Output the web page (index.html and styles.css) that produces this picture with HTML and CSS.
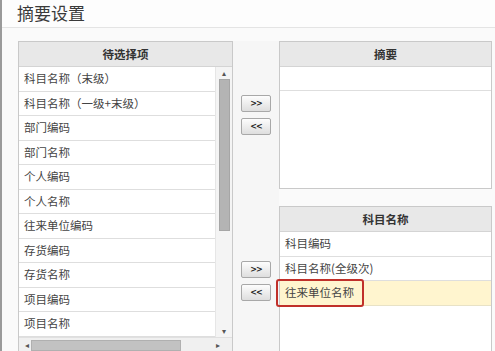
FILE: index.html
```html
<!DOCTYPE html>
<html lang="zh-CN">
<head>
    <meta charset="UTF-8">
    <title>摘要设置</title>
    <link rel="stylesheet" href="styles.css">
</head>
<body>
    <div class="dialog">
        <div class="titulo">摘要设置</div>

        <div class="conteudo">
            <!-- lista da esquerda -->
            <div class="painel esquerdo">
                <div class="cabecalho">待选择项</div>
                <div class="corpo">
                    <div class="lista">
                        <div class="item">科目名称（末级）</div>
                        <div class="item">科目名称（一级+末级）</div>
                        <div class="item">部门编码</div>
                        <div class="item">部门名称</div>
                        <div class="item">个人编码</div>
                        <div class="item">个人名称</div>
                        <div class="item">往来单位编码</div>
                        <div class="item">存货编码</div>
                        <div class="item">存货名称</div>
                        <div class="item">项目编码</div>
                        <div class="item">项目名称</div>
                    </div>
                    <div class="rolagem-v">
                        <span class="seta">&#9652;</span>
                        <div class="trilho-v"><div class="polegar-v"></div></div>
                        <span class="seta">&#9662;</span>
                    </div>
                </div>
                <div class="rolagem-h">
                    <span class="seta">&#9666;</span>
                    <div class="trilho-h"><div class="polegar-h"></div></div>
                    <span class="seta">&#9656;</span>
                </div>
            </div>

            <!-- botoes do meio -->
            <div class="meio">
                <div class="grupo primeiro">
                    <button type="button">&gt;&gt;</button>
                    <button type="button">&lt;&lt;</button>
                </div>
                <div class="grupo segundo">
                    <button type="button">&gt;&gt;</button>
                    <button type="button">&lt;&lt;</button>
                </div>
            </div>

            <!-- paineis da direita -->
            <div class="direita">
                <div class="painel resumo">
                    <div class="cabecalho">摘要</div>
                    <div class="item vazio"></div>
                </div>
                <div class="painel selecionados">
                    <div class="cabecalho">科目名称</div>
                    <div class="item">科目编码</div>
                    <div class="item">科目名称(全级次)</div>
                    <div class="item ativo">往来单位名称<span class="marca"></span></div>
                </div>
            </div>
        </div>
    </div>
</body>
</html>
```

FILE: styles.css
```css
/* base */
body {
    margin: 0;
    font-family: "Noto Sans CJK SC", "Noto Sans", sans-serif;
    color: #444;
    background: #fff;
}

.dialog {
    width: 495px;
    height: 351px;
    overflow: hidden;
    box-sizing: border-box;
    border-left: 2px solid #9a9a9a;
    background: #fafafa;
}

/* titulo */
.titulo {
    height: 27px;
    line-height: 25px;
    padding-left: 15px;
    font-size: 17px;
    color: #3a3a3a;
    background: #fdfdfd;
    border-bottom: 1px solid #e4e4e4;
}

.conteudo {
    display: flex;
    padding: 13px 0 0 16px;
}

/* paineis */
.painel {
    border: 1px solid #c9c9c9;
    background: #fff;
    box-sizing: border-box;
}

.cabecalho {
    height: 24px;
    line-height: 24px;
    text-align: center;
    font-size: 11.5px;
    font-weight: bold;
    color: #333;
    background: #e8e8e8;
    border-bottom: 1px solid #d4d4d4;
}

.item {
    height: 23.5px;
    line-height: 23.5px;
    padding-left: 5px;
    font-size: 11.5px;
    border-bottom: 1px solid #dedede;
    white-space: nowrap;
}

.esquerdo {
    width: 215px;
    height: 312px;
    display: flex;
    flex-direction: column;
}

.corpo {
    display: flex;
    flex: 1;
    min-height: 0;
}

.lista {
    width: 197px;
    border-right: 1px solid #e6e6e6;
}

/* barra de rolagem vertical */
.rolagem-v {
    width: 16px;
    display: flex;
    flex-direction: column;
    align-items: center;
    background: #f4f4f4;
}

.seta {
    font-size: 8px;
    line-height: 12px;
    color: #555;
}

.trilho-v {
    flex: 1;
    width: 11px;
}

.polegar-v {
    height: 152px;
    background: #b4b4b4;
    border: 1px solid #a6a6a6;
    box-sizing: border-box;
}

/* barra de rolagem horizontal */
.rolagem-h {
    height: 14px;
    flex-shrink: 0;
    display: flex;
    align-items: center;
    gap: 2px;
    padding: 0 12px 0 6px;
    background: #f0f0f0;
    border-top: 1px solid #e0e0e0;
}

.trilho-h {
    flex: 1;
    height: 11px;
}

.polegar-h {
    width: 150px;
    height: 11px;
    background: #c2c2c2;
    border: 1px solid #b0b0b0;
    box-sizing: border-box;
}

/* coluna do meio */
.meio {
    width: 46px;
    display: flex;
    flex-direction: column;
    align-items: flex-start;
    padding-left: 8px;
    box-sizing: border-box;
    background: #f6f6f6;
    height: 320px;
}

.grupo {
    display: flex;
    flex-direction: column;
    gap: 6px;
}

.grupo.primeiro {
    margin-top: 54px;
}

.grupo.segundo {
    margin-top: 126px;
}

button {
    width: 30px;
    height: 17px;
    padding: 0;
    font-family: "DejaVu Sans", sans-serif;
    font-size: 8px;
    font-weight: bold;
    letter-spacing: -1px;
    color: #222;
    border: 1px solid #a8a8a8;
    border-radius: 2px;
    background: linear-gradient(#fdfdfd, #dedede);
}

/* direita */
.direita {
    width: 213px;
    display: flex;
    flex-direction: column;
    gap: 17px;
}

.resumo {
    height: 148px;
}

.vazio {
    height: 23px;
}

.selecionados {
    height: 200px;
    border-bottom: none;
}

.item.ativo {
    position: relative;
    background: #fff5cf;
    border-bottom-color: #e8e2c6;
}

/* destaque vermelho */
.marca {
    position: absolute;
    left: -4px;
    top: -2px;
    width: 88px;
    height: 28px;
    border: 2.5px solid #c0302a;
    border-radius: 3px;
    box-sizing: border-box;
}
```
